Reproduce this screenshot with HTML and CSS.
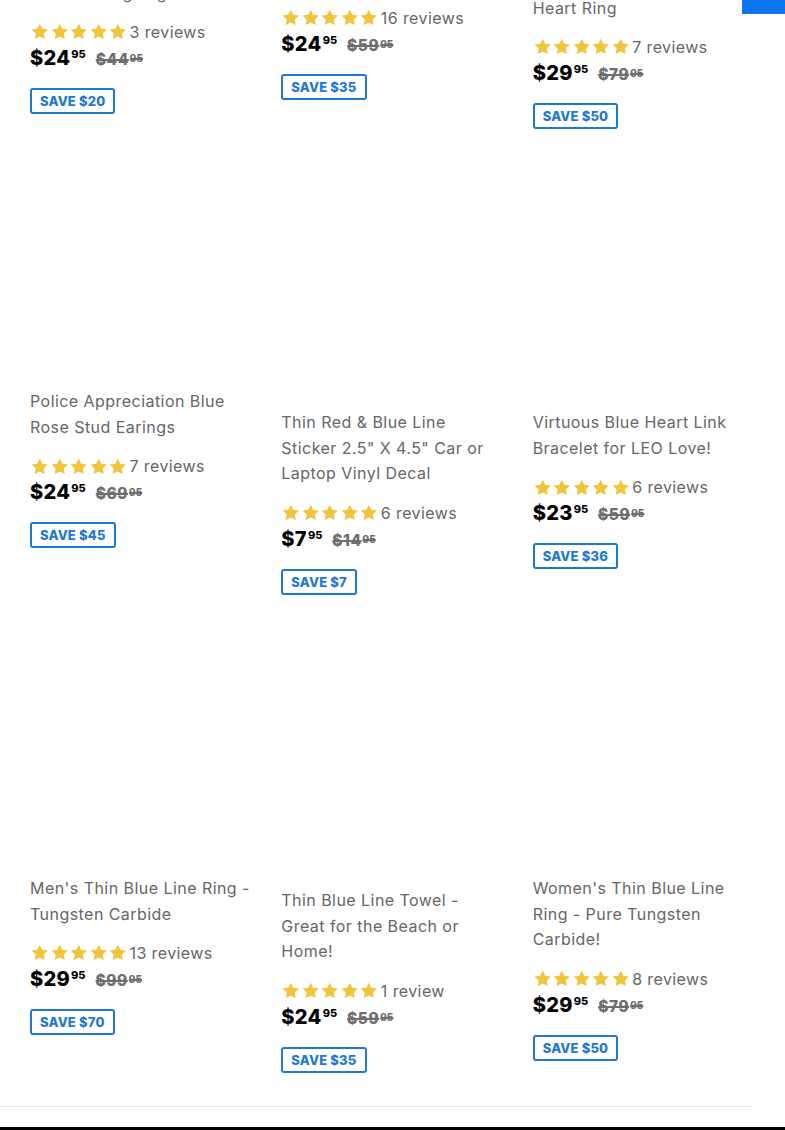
FILE: index.html
```html
<!DOCTYPE html>
<html lang="en">
<head>
<meta charset="utf-8">
<title>Products</title>
<link rel="stylesheet" href="styles.css">
</head>
<body>
<div class="corner-tab"></div>
<main class="page">
  <div class="grid">
    <div class="card">
      <div class="thumb h236"></div>
      <div class="title">Thin Blue Line Flag Pendant Dog Tag Necklace</div>
      <div class="reviews"><span class="stars"><svg viewBox="0 0 24 24"><path d="M12 2l3.09 6.26L22 9.27l-5 4.87 1.18 6.88L12 17.77l-6.18 3.25L7 14.14 2 9.27l6.91-1.01L12 2z"/></svg><svg viewBox="0 0 24 24"><path d="M12 2l3.09 6.26L22 9.27l-5 4.87 1.18 6.88L12 17.77l-6.18 3.25L7 14.14 2 9.27l6.91-1.01L12 2z"/></svg><svg viewBox="0 0 24 24"><path d="M12 2l3.09 6.26L22 9.27l-5 4.87 1.18 6.88L12 17.77l-6.18 3.25L7 14.14 2 9.27l6.91-1.01L12 2z"/></svg><svg viewBox="0 0 24 24"><path d="M12 2l3.09 6.26L22 9.27l-5 4.87 1.18 6.88L12 17.77l-6.18 3.25L7 14.14 2 9.27l6.91-1.01L12 2z"/></svg><svg viewBox="0 0 24 24"><path d="M12 2l3.09 6.26L22 9.27l-5 4.87 1.18 6.88L12 17.77l-6.18 3.25L7 14.14 2 9.27l6.91-1.01L12 2z"/></svg></span><span class="count">3 reviews</span></div>
      <div class="price"><span class="now">$24<span class="cents">95</span></span><s class="was">$44<span class="cents">95</span></s></div>
      <span class="save">Save $20</span>
    </div>
    <div class="card">
      <div class="thumb h222"></div>
      <div class="title">Thin Blue Line American Flag Bracelet</div>
      <div class="reviews"><span class="stars"><svg viewBox="0 0 24 24"><path d="M12 2l3.09 6.26L22 9.27l-5 4.87 1.18 6.88L12 17.77l-6.18 3.25L7 14.14 2 9.27l6.91-1.01L12 2z"/></svg><svg viewBox="0 0 24 24"><path d="M12 2l3.09 6.26L22 9.27l-5 4.87 1.18 6.88L12 17.77l-6.18 3.25L7 14.14 2 9.27l6.91-1.01L12 2z"/></svg><svg viewBox="0 0 24 24"><path d="M12 2l3.09 6.26L22 9.27l-5 4.87 1.18 6.88L12 17.77l-6.18 3.25L7 14.14 2 9.27l6.91-1.01L12 2z"/></svg><svg viewBox="0 0 24 24"><path d="M12 2l3.09 6.26L22 9.27l-5 4.87 1.18 6.88L12 17.77l-6.18 3.25L7 14.14 2 9.27l6.91-1.01L12 2z"/></svg><svg viewBox="0 0 24 24"><path d="M12 2l3.09 6.26L22 9.27l-5 4.87 1.18 6.88L12 17.77l-6.18 3.25L7 14.14 2 9.27l6.91-1.01L12 2z"/></svg></span><span class="count">16 reviews</span></div>
      <div class="price"><span class="now">$24<span class="cents">95</span></span><s class="was">$59<span class="cents">95</span></s></div>
      <span class="save">Save $35</span>
    </div>
    <div class="card">
      <div class="thumb h251"></div>
      <div class="title">Police Wife Thin Blue Line Heart Ring</div>
      <div class="reviews"><span class="stars"><svg viewBox="0 0 24 24"><path d="M12 2l3.09 6.26L22 9.27l-5 4.87 1.18 6.88L12 17.77l-6.18 3.25L7 14.14 2 9.27l6.91-1.01L12 2z"/></svg><svg viewBox="0 0 24 24"><path d="M12 2l3.09 6.26L22 9.27l-5 4.87 1.18 6.88L12 17.77l-6.18 3.25L7 14.14 2 9.27l6.91-1.01L12 2z"/></svg><svg viewBox="0 0 24 24"><path d="M12 2l3.09 6.26L22 9.27l-5 4.87 1.18 6.88L12 17.77l-6.18 3.25L7 14.14 2 9.27l6.91-1.01L12 2z"/></svg><svg viewBox="0 0 24 24"><path d="M12 2l3.09 6.26L22 9.27l-5 4.87 1.18 6.88L12 17.77l-6.18 3.25L7 14.14 2 9.27l6.91-1.01L12 2z"/></svg><svg viewBox="0 0 24 24"><path d="M12 2l3.09 6.26L22 9.27l-5 4.87 1.18 6.88L12 17.77l-6.18 3.25L7 14.14 2 9.27l6.91-1.01L12 2z"/></svg></span><span class="count">7 reviews</span></div>
      <div class="price"><span class="now">$29<span class="cents">95</span></span><s class="was">$79<span class="cents">95</span></s></div>
      <span class="save">Save $50</span>
    </div>

    <div class="card">
      <div class="thumb h201"></div>
      <div class="title">Police Appreciation Blue Rose Stud Earings</div>
      <div class="reviews"><span class="stars"><svg viewBox="0 0 24 24"><path d="M12 2l3.09 6.26L22 9.27l-5 4.87 1.18 6.88L12 17.77l-6.18 3.25L7 14.14 2 9.27l6.91-1.01L12 2z"/></svg><svg viewBox="0 0 24 24"><path d="M12 2l3.09 6.26L22 9.27l-5 4.87 1.18 6.88L12 17.77l-6.18 3.25L7 14.14 2 9.27l6.91-1.01L12 2z"/></svg><svg viewBox="0 0 24 24"><path d="M12 2l3.09 6.26L22 9.27l-5 4.87 1.18 6.88L12 17.77l-6.18 3.25L7 14.14 2 9.27l6.91-1.01L12 2z"/></svg><svg viewBox="0 0 24 24"><path d="M12 2l3.09 6.26L22 9.27l-5 4.87 1.18 6.88L12 17.77l-6.18 3.25L7 14.14 2 9.27l6.91-1.01L12 2z"/></svg><svg viewBox="0 0 24 24"><path d="M12 2l3.09 6.26L22 9.27l-5 4.87 1.18 6.88L12 17.77l-6.18 3.25L7 14.14 2 9.27l6.91-1.01L12 2z"/></svg></span><span class="count">7 reviews</span></div>
      <div class="price"><span class="now">$24<span class="cents">95</span></span><s class="was">$69<span class="cents">95</span></s></div>
      <span class="save">Save $45</span>
    </div>
    <div class="card">
      <div class="thumb h222"></div>
      <div class="title">Thin Red &amp; Blue Line Sticker 2.5" X 4.5" Car or Laptop Vinyl Decal</div>
      <div class="reviews"><span class="stars"><svg viewBox="0 0 24 24"><path d="M12 2l3.09 6.26L22 9.27l-5 4.87 1.18 6.88L12 17.77l-6.18 3.25L7 14.14 2 9.27l6.91-1.01L12 2z"/></svg><svg viewBox="0 0 24 24"><path d="M12 2l3.09 6.26L22 9.27l-5 4.87 1.18 6.88L12 17.77l-6.18 3.25L7 14.14 2 9.27l6.91-1.01L12 2z"/></svg><svg viewBox="0 0 24 24"><path d="M12 2l3.09 6.26L22 9.27l-5 4.87 1.18 6.88L12 17.77l-6.18 3.25L7 14.14 2 9.27l6.91-1.01L12 2z"/></svg><svg viewBox="0 0 24 24"><path d="M12 2l3.09 6.26L22 9.27l-5 4.87 1.18 6.88L12 17.77l-6.18 3.25L7 14.14 2 9.27l6.91-1.01L12 2z"/></svg><svg viewBox="0 0 24 24"><path d="M12 2l3.09 6.26L22 9.27l-5 4.87 1.18 6.88L12 17.77l-6.18 3.25L7 14.14 2 9.27l6.91-1.01L12 2z"/></svg></span><span class="count">6 reviews</span></div>
      <div class="price"><span class="now">$7<span class="cents">95</span></span><s class="was">$14<span class="cents">95</span></s></div>
      <span class="save">Save $7</span>
    </div>
    <div class="card">
      <div class="thumb h222"></div>
      <div class="title">Virtuous Blue Heart Link Bracelet for LEO Love!</div>
      <div class="reviews"><span class="stars"><svg viewBox="0 0 24 24"><path d="M12 2l3.09 6.26L22 9.27l-5 4.87 1.18 6.88L12 17.77l-6.18 3.25L7 14.14 2 9.27l6.91-1.01L12 2z"/></svg><svg viewBox="0 0 24 24"><path d="M12 2l3.09 6.26L22 9.27l-5 4.87 1.18 6.88L12 17.77l-6.18 3.25L7 14.14 2 9.27l6.91-1.01L12 2z"/></svg><svg viewBox="0 0 24 24"><path d="M12 2l3.09 6.26L22 9.27l-5 4.87 1.18 6.88L12 17.77l-6.18 3.25L7 14.14 2 9.27l6.91-1.01L12 2z"/></svg><svg viewBox="0 0 24 24"><path d="M12 2l3.09 6.26L22 9.27l-5 4.87 1.18 6.88L12 17.77l-6.18 3.25L7 14.14 2 9.27l6.91-1.01L12 2z"/></svg><svg viewBox="0 0 24 24"><path d="M12 2l3.09 6.26L22 9.27l-5 4.87 1.18 6.88L12 17.77l-6.18 3.25L7 14.14 2 9.27l6.91-1.01L12 2z"/></svg></span><span class="count">6 reviews</span></div>
      <div class="price"><span class="now">$23<span class="cents">95</span></span><s class="was">$59<span class="cents">95</span></s></div>
      <span class="save">Save $36</span>
    </div>

    <div class="card">
      <div class="thumb h222"></div>
      <div class="title">Men's Thin Blue Line Ring - Tungsten Carbide</div>
      <div class="reviews"><span class="stars"><svg viewBox="0 0 24 24"><path d="M12 2l3.09 6.26L22 9.27l-5 4.87 1.18 6.88L12 17.77l-6.18 3.25L7 14.14 2 9.27l6.91-1.01L12 2z"/></svg><svg viewBox="0 0 24 24"><path d="M12 2l3.09 6.26L22 9.27l-5 4.87 1.18 6.88L12 17.77l-6.18 3.25L7 14.14 2 9.27l6.91-1.01L12 2z"/></svg><svg viewBox="0 0 24 24"><path d="M12 2l3.09 6.26L22 9.27l-5 4.87 1.18 6.88L12 17.77l-6.18 3.25L7 14.14 2 9.27l6.91-1.01L12 2z"/></svg><svg viewBox="0 0 24 24"><path d="M12 2l3.09 6.26L22 9.27l-5 4.87 1.18 6.88L12 17.77l-6.18 3.25L7 14.14 2 9.27l6.91-1.01L12 2z"/></svg><svg viewBox="0 0 24 24"><path d="M12 2l3.09 6.26L22 9.27l-5 4.87 1.18 6.88L12 17.77l-6.18 3.25L7 14.14 2 9.27l6.91-1.01L12 2z"/></svg></span><span class="count">13 reviews</span></div>
      <div class="price"><span class="now">$29<span class="cents">95</span></span><s class="was">$99<span class="cents">95</span></s></div>
      <span class="save">Save $70</span>
    </div>
    <div class="card">
      <div class="thumb h234"></div>
      <div class="title">Thin Blue Line Towel - Great for the Beach or Home!</div>
      <div class="reviews"><span class="stars"><svg viewBox="0 0 24 24"><path d="M12 2l3.09 6.26L22 9.27l-5 4.87 1.18 6.88L12 17.77l-6.18 3.25L7 14.14 2 9.27l6.91-1.01L12 2z"/></svg><svg viewBox="0 0 24 24"><path d="M12 2l3.09 6.26L22 9.27l-5 4.87 1.18 6.88L12 17.77l-6.18 3.25L7 14.14 2 9.27l6.91-1.01L12 2z"/></svg><svg viewBox="0 0 24 24"><path d="M12 2l3.09 6.26L22 9.27l-5 4.87 1.18 6.88L12 17.77l-6.18 3.25L7 14.14 2 9.27l6.91-1.01L12 2z"/></svg><svg viewBox="0 0 24 24"><path d="M12 2l3.09 6.26L22 9.27l-5 4.87 1.18 6.88L12 17.77l-6.18 3.25L7 14.14 2 9.27l6.91-1.01L12 2z"/></svg><svg viewBox="0 0 24 24"><path d="M12 2l3.09 6.26L22 9.27l-5 4.87 1.18 6.88L12 17.77l-6.18 3.25L7 14.14 2 9.27l6.91-1.01L12 2z"/></svg></span><span class="count">1 review</span></div>
      <div class="price"><span class="now">$24<span class="cents">95</span></span><s class="was">$59<span class="cents">95</span></s></div>
      <span class="save">Save $35</span>
    </div>
    <div class="card">
      <div class="thumb h222"></div>
      <div class="title">Women's Thin Blue Line Ring - Pure Tungsten Carbide!</div>
      <div class="reviews"><span class="stars"><svg viewBox="0 0 24 24"><path d="M12 2l3.09 6.26L22 9.27l-5 4.87 1.18 6.88L12 17.77l-6.18 3.25L7 14.14 2 9.27l6.91-1.01L12 2z"/></svg><svg viewBox="0 0 24 24"><path d="M12 2l3.09 6.26L22 9.27l-5 4.87 1.18 6.88L12 17.77l-6.18 3.25L7 14.14 2 9.27l6.91-1.01L12 2z"/></svg><svg viewBox="0 0 24 24"><path d="M12 2l3.09 6.26L22 9.27l-5 4.87 1.18 6.88L12 17.77l-6.18 3.25L7 14.14 2 9.27l6.91-1.01L12 2z"/></svg><svg viewBox="0 0 24 24"><path d="M12 2l3.09 6.26L22 9.27l-5 4.87 1.18 6.88L12 17.77l-6.18 3.25L7 14.14 2 9.27l6.91-1.01L12 2z"/></svg><svg viewBox="0 0 24 24"><path d="M12 2l3.09 6.26L22 9.27l-5 4.87 1.18 6.88L12 17.77l-6.18 3.25L7 14.14 2 9.27l6.91-1.01L12 2z"/></svg></span><span class="count">8 reviews</span></div>
      <div class="price"><span class="now">$29<span class="cents">95</span></span><s class="was">$79<span class="cents">95</span></s></div>
      <span class="save">Save $50</span>
    </div>
  </div>
  <hr class="rule">
</main>
<footer class="footer"></footer>
</body>
</html>
```
FILE: styles.css
```css
html, body {
  margin: 0;
  padding: 0;
  background: #fff;
}
body {
  font-family: "Inter", "Liberation Sans", sans-serif;
  color: #666;
  overflow: hidden;
}
.corner-tab {
  position: fixed;
  top: 0;
  right: 0;
  width: 43px;
  height: 14px;
  background: #0d76ef;
  z-index: 5;
}
.page {
  margin-top: -302px;
}
.grid {
  width: 754px;
  display: grid;
  grid-template-columns: repeat(3, 1fr);
  row-gap: 38px;
  align-items: start;
}
.card {
  padding-left: 30px;
  display: flex;
  flex-direction: column;
  align-items: flex-start;
  min-width: 0;
}
.thumb {
  width: 100%;
  margin-bottom: 20px;
}
.h201 { height: 201px; }
.h222 { height: 222px; }
.h234 { height: 234px; }
.h236 { height: 236px; }
.h251 { height: 251px; }
.title {
  padding-top: 1px;
  font-size: 16px;
  line-height: 25.6px;
  letter-spacing: 0.45px;
  color: #666;
}
.reviews {
  margin-top: 16px;
  height: 20px;
  display: flex;
  align-items: center;
}
.stars {
  display: flex;
}
.stars svg {
  width: 19.5px;
  height: 19.5px;
  fill: #f0c53c;
}
.count {
  margin-left: 2px;
  font-size: 16px;
  letter-spacing: 0.4px;
  color: #666;
}
.price {
  margin-top: 6px;
  display: flex;
  align-items: baseline;
  gap: 10px;
  font-weight: 800;
}
.now,
.was {
  display: flex;
  align-items: flex-start;
  line-height: 1;
}
.now {
  font-size: 20px;
  letter-spacing: 0.3px;
  color: #000;
}
.was {
  font-size: 15.5px;
  letter-spacing: 0.5px;
  color: #6e6e6e;
  text-decoration: line-through;
  text-decoration-thickness: 2px;
}
.cents {
  line-height: 1;
  margin-left: 1px;
  letter-spacing: 0;
}
.now .cents {
  font-size: 11px;
  margin-top: 1px;
}
.was .cents {
  font-size: 10px;
  margin-top: 1px;
}
.save {
  margin-top: 20px;
  box-sizing: border-box;
  height: 26px;
  display: inline-flex;
  align-items: center;
  border: 2px solid #1f78d1;
  border-radius: 3px;
  padding: 0 8px;
  font-size: 13px;
  font-weight: 800;
  letter-spacing: 0.2px;
  color: #1f78d1;
  text-transform: uppercase;
}
.rule {
  width: 752px;
  margin: 33px 0 20px 0;
  border: 0;
  border-top: 1px solid #e6e6e6;
}
.footer {
  height: 40px;
  background: #000;
}
```
